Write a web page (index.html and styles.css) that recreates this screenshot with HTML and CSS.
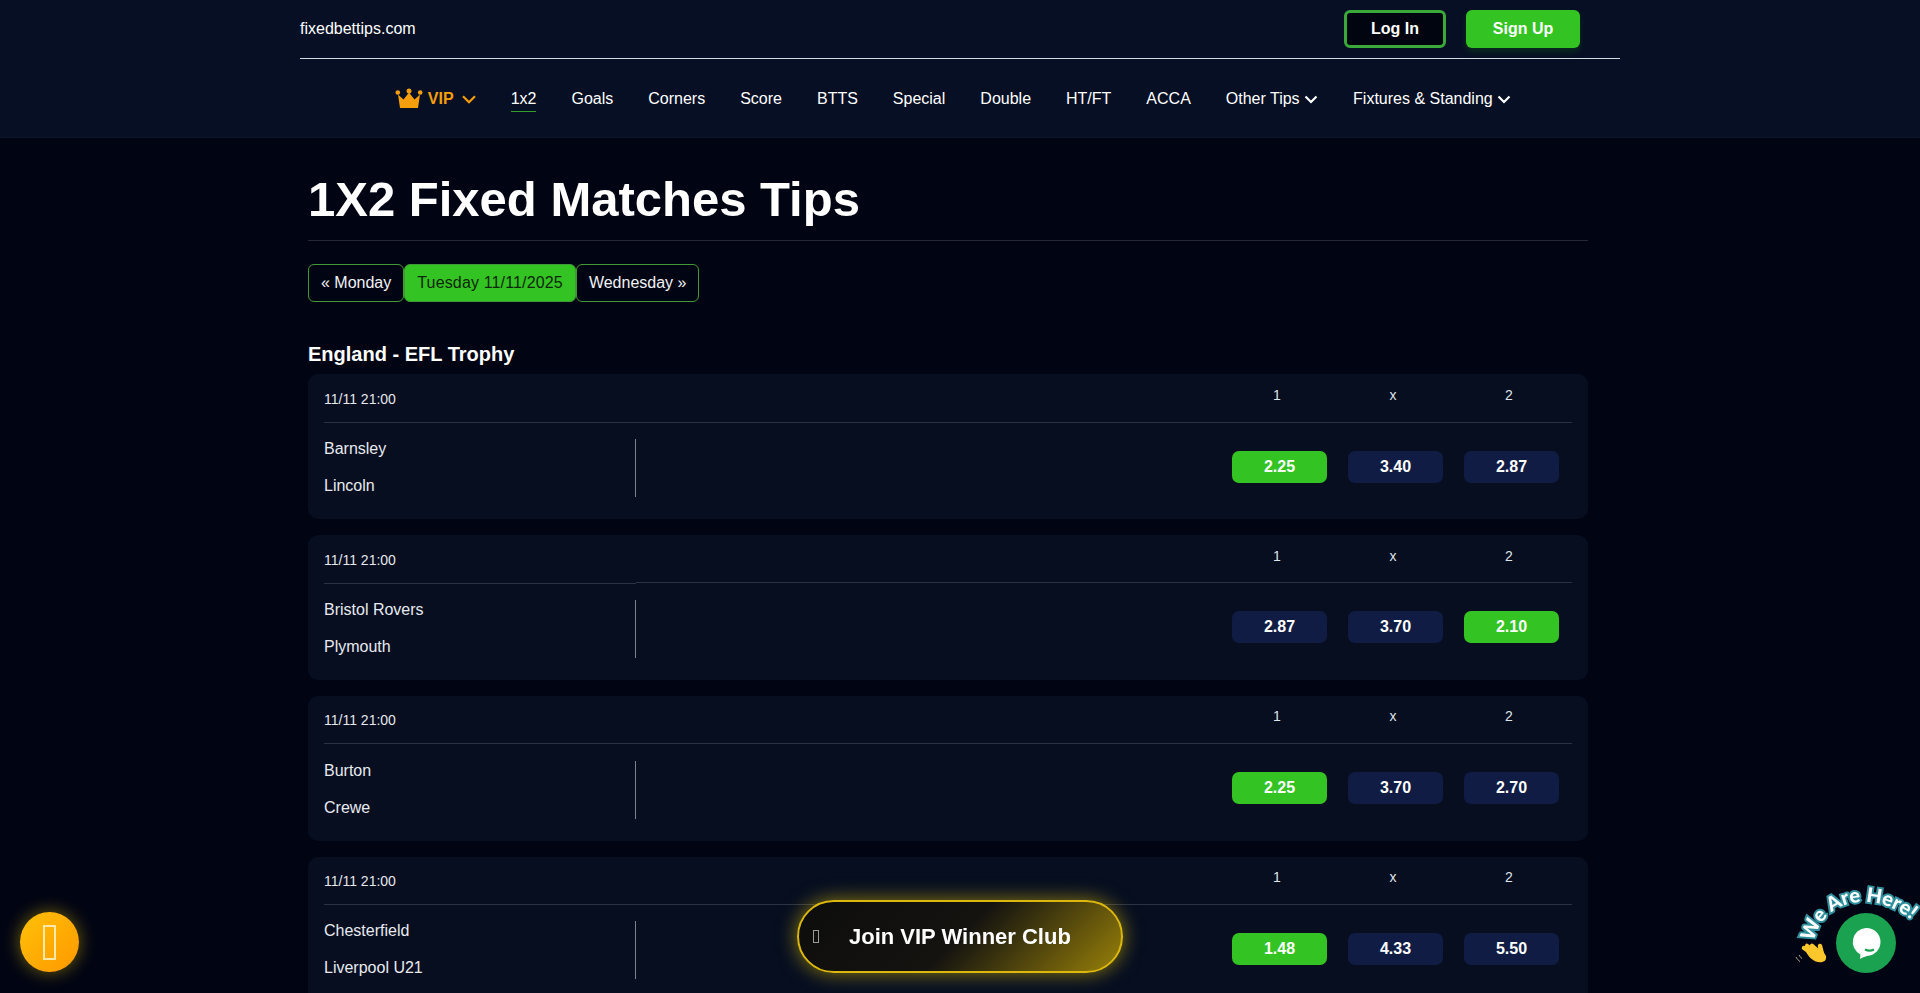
FILE: index.html
```html
<!DOCTYPE html>
<html lang="en">
<head>
    <meta charset="UTF-8">
    <meta name="viewport" content="width=device-width, initial-scale=1.0">
    <title>1X2 Fixed Matches Tips</title>
    <link rel="stylesheet" href="styles.css">
</head>
<body>
    <header class="header">
        <div class="topbar">
            <a class="logo">fixedbettips.com</a>
            <div class="auth">
                <a class="login">Log In</a>
                <a class="signup">Sign Up</a>
            </div>
        </div>
        <nav class="nav">
            <a class="vip">
                <svg class="crown" viewBox="0 0 28 20">
                    <circle cx="2.800" cy="4.500" r="2.300" fill="#f59e0b"/>
                    <circle cx="14" cy="3" r="2.500" fill="#f59e0b"/>
                    <circle cx="25.200" cy="4.500" r="2.300" fill="#f59e0b"/>
                    <path d="M3 6.500 8.500 11.500 14 4.500 19.500 11.500 25 6.500 23 20H5z" fill="#f59e0b"/>
                </svg>
                VIP
                <svg class="chev chev-vip" viewBox="0 0 14 9"><path d="M1 1.200 7 7.200l6-6" fill="none" stroke="#f59e0b" stroke-width="2.200"/></svg>
            </a>
            <a class="active">1x2</a>
            <a>Goals</a>
            <a>Corners</a>
            <a>Score</a>
            <a>BTTS</a>
            <a>Special</a>
            <a>Double</a>
            <a>HT/FT</a>
            <a>ACCA</a>
            <a>Other Tips <svg class="chev" viewBox="0 0 14 9"><path d="M1.500 1.500 7 7l5.500-5.500" fill="none" stroke="#fff" stroke-width="2.200"/></svg></a>
            <a>Fixtures &amp; Standing <svg class="chev" viewBox="0 0 14 9"><path d="M1.500 1.500 7 7l5.500-5.500" fill="none" stroke="#fff" stroke-width="2.200"/></svg></a>
        </nav>
    </header>

    <main class="main">
        <h1 class="title">1X2 Fixed Matches Tips</h1>
        <div class="days">
            <a>&laquo; Monday</a>
            <a class="today">Tuesday 11/11/2025</a>
            <a>Wednesday &raquo;</a>
        </div>
        <h2 class="league">England - EFL Trophy</h2>

        <div class="card">
            <div class="card-head">
                <div class="time">11/11 21:00</div>
                <div class="labels"><span>1</span><span>x</span><span>2</span></div>
            </div>
            <div class="card-body">
                <div class="teams"><div>Barnsley</div><div>Lincoln</div></div>
                <div class="odds"><span class="odd win">2.25</span><span class="odd">3.40</span><span class="odd">2.87</span></div>
            </div>
        </div>

        <div class="card">
            <div class="card-head">
                <div class="time">11/11 21:00</div>
                <div class="labels"><span>1</span><span>x</span><span>2</span></div>
            </div>
            <div class="card-body">
                <div class="teams"><div>Bristol Rovers</div><div>Plymouth</div></div>
                <div class="odds"><span class="odd">2.87</span><span class="odd">3.70</span><span class="odd win">2.10</span></div>
            </div>
        </div>

        <div class="card">
            <div class="card-head">
                <div class="time">11/11 21:00</div>
                <div class="labels"><span>1</span><span>x</span><span>2</span></div>
            </div>
            <div class="card-body">
                <div class="teams"><div>Burton</div><div>Crewe</div></div>
                <div class="odds"><span class="odd win">2.25</span><span class="odd">3.70</span><span class="odd">2.70</span></div>
            </div>
        </div>

        <div class="card">
            <div class="card-head">
                <div class="time">11/11 21:00</div>
                <div class="labels"><span>1</span><span>x</span><span>2</span></div>
            </div>
            <div class="card-body">
                <div class="teams"><div>Chesterfield</div><div>Liverpool U21</div></div>
                <div class="odds"><span class="odd win">1.48</span><span class="odd">4.33</span><span class="odd">5.50</span></div>
            </div>
        </div>
    </main>

    <a class="coin"><span class="tofu"></span></a>

    <a class="join"><span class="tofu"></span>Join VIP Winner Club</a>

    <div class="chat">
        <svg class="chat-label" viewBox="0 0 150 123">
            <defs><path id="arc" d="M44 72C52 30 104 16 146 54"/></defs>
            <text class="arc-text arc-back"><textPath href="#arc">We Are Here!</textPath></text>
            <text class="arc-text"><textPath href="#arc">We Are Here!</textPath></text>
            <g fill="none" stroke="#fcc62d" stroke-width="4.500" stroke-linecap="round">
                <path d="M46 86 34 78"/>
                <path d="M48 84 37 76"/>
                <path d="M50 83 42 76"/>
                <path d="M52 84 50 76"/>
            </g>
            <path d="M35 80 51 78 56 86C57 91 53 93 48 92 42 91 38 86 35 80z" fill="#fcc62d"/>
            <path d="M26 87c1 2 2 3 4 4.500M29 85c1 1.500 1.500 2.500 3 3.500" fill="none" stroke="#b9b08a" stroke-width="1"/>
        </svg>
        <div class="chat-btn">
            <svg viewBox="0 0 60 60" width="60" height="60">
                <path d="M30 15a14 14 0 0 1 1 28c-2 .5-5 1.500-7 3l.500-4.500A14 14 0 0 1 30 15z" fill="#fff"/>
                <path d="M29 36.500c3 1.500 6 1.500 9 0" fill="none" stroke="#1aa251" stroke-width="2.200"/>
            </svg>
        </div>
    </div>
</body>
</html>
```
FILE: styles.css
```css
* {
    margin: 0;
    padding: 0;
    box-sizing: border-box;
}
html, body {
    height: 100vh;
    overflow: hidden;
}
body {
    background-color: #000413;
    color: #fff;
    font-family: "Liberation Sans", Arial, sans-serif;
    font-size: 16px;
}
a {
    color: inherit;
    text-decoration: none;
}
.header {
    height: 138px;
    background-color: #070f24;
    border-bottom: 1px solid #0e1628;
}
.topbar {
    width: 1320px;
    height: 59px;
    margin: 0 auto;
    display: flex;
    justify-content: space-between;
    align-items: center;
    border-bottom: 1px solid #d5d9e2;
}
.auth {
    display: flex;
    gap: 20px;
    margin-right: 40px;
}
.login, .signup {
    height: 38px;
    display: flex;
    align-items: center;
    justify-content: center;
    border-radius: 6px;
    font-weight: bold;
}
.login {
    width: 102px;
    background-color: #01050f;
    border: 3px solid #3ba83a;
}
.signup {
    width: 114px;
    background-color: #33c322;
    box-shadow: 0 4px 6px rgba(20, 110, 20, 0.3);
}
.nav {
    display: flex;
    justify-content: center;
    gap: 35px;
    height: 78px;
    padding-top: 29px;
    margin-right: 14px;
}
.nav a {
    height: 24px;
    line-height: 21px;
    white-space: nowrap;
}
.nav .active {
    border-bottom: 1px solid #34a02c;
    height: 24px;
}
.vip {
    display: flex;
    align-items: flex-start;
    color: #f59e0b;
    font-weight: bold;
}
.crown {
    width: 28px;
    height: 20px;
    margin-right: 5px;
}
.chev {
    width: 14px;
    height: 9px;
}
.chev-vip {
    margin: 7px 0 0 8px;
}
.main {
    width: 1280px;
    margin-left: 308px;
}
.title {
    height: 103px;
    padding-top: 32px;
    font-size: 49px;
    line-height: 58px;
    border-bottom: 1px solid #232936;
}
.days {
    display: flex;
    margin-top: 23px;
}
.days a {
    height: 38px;
    padding: 0 12px;
    line-height: 36px;
    border: 1px solid #3f9a36;
    border-radius: 6px;
    color: #f0f2f5;
}
.days .today {
    background-color: #33c322;
    color: #10260e;
    letter-spacing: 0.15px;
}
.league {
    margin-top: 40px;
    height: 32.4px;
    font-size: 20px;
    line-height: 24px;
}
.card {
    height: 144.8px;
    margin-bottom: 16px;
    padding: 0 16px;
    background-color: #060e20;
    border-radius: 10px;
}
.card-head {
    display: grid;
    grid-template-columns: 312px 1fr;
    align-items: start;
}
.time {
    height: 48.5px;
    padding-top: 14.4px;
    font-size: 14px;
    line-height: 21px;
    color: #e4e7ec;
    border-bottom: 1px solid #2b3244;
}
.labels {
    height: 48.2px;
    padding: 10.4px 15.5px 0 0;
    display: flex;
    justify-content: flex-end;
    gap: 21px;
    font-size: 14px;
    line-height: 21px;
    color: #dfe3ea;
    border-bottom: 1px solid #2b3244;
}
.labels span {
    width: 95px;
    text-align: center;
}
.card-body {
    display: grid;
    grid-template-columns: 312px 1fr;
    margin-top: 16.1px;
}
.teams {
    height: 58px;
    padding-top: 1px;
    border-right: 1px solid #7b818d;
    line-height: 18px;
    color: #e8eaef;
}
.teams div + div {
    margin-top: 19px;
}
.odds {
    display: flex;
    justify-content: flex-end;
    gap: 21px;
    padding: 11.6px 13px 0 0;
}
.odd {
    width: 95px;
    height: 32px;
    line-height: 32px;
    text-align: center;
    font-weight: bold;
    background-color: #101c44;
    border-radius: 7px;
}
.odd.win {
    background-color: #33c322;
}
.tofu {
    display: block;
    border-style: solid;
}
.coin {
    position: fixed;
    left: 20px;
    top: 912px;
    width: 59px;
    height: 60px;
    display: flex;
    align-items: center;
    justify-content: center;
    border-radius: 50%;
    background: linear-gradient(135deg, #ffc107, #ff9800);
    box-shadow: 0 0 18px rgba(255, 215, 0, 0.45);
}
.coin .tofu {
    width: 13px;
    height: 35px;
    border-width: 2px;
    border-color: #ffe9a8;
}
.join {
    position: fixed;
    left: 797px;
    top: 900px;
    width: 326px;
    height: 73px;
    display: flex;
    align-items: center;
    padding-left: 14px;
    border: 2px solid #dcb80f;
    border-radius: 37px;
    background: linear-gradient(135deg, #0d0d0d 0%, #141310 50%, #988109 100%);
    box-shadow: 0 0 20px rgba(255, 215, 0, 0.55);
    font-size: 22px;
    font-weight: bold;
}
.join .tofu {
    width: 6px;
    height: 13px;
    margin-right: 30px;
    border-width: 1px;
    border-color: #9a9a9a;
}
.chat {
    position: fixed;
    left: 1770px;
    top: 870px;
    width: 150px;
    height: 123px;
}
.chat-label {
    display: block;
    width: 150px;
    height: 123px;
}
.arc-text {
    font-family: Lato, sans-serif;
    font-size: 20px;
    font-weight: 900;
    fill: #fff;
}
.arc-back {
    fill: none;
    stroke: #2f8f9d;
    stroke-width: 4px;
}
.chat-btn {
    position: absolute;
    left: 66px;
    top: 43px;
    width: 60px;
    height: 60px;
    border-radius: 50%;
    background-color: #1aa251;
}
```
